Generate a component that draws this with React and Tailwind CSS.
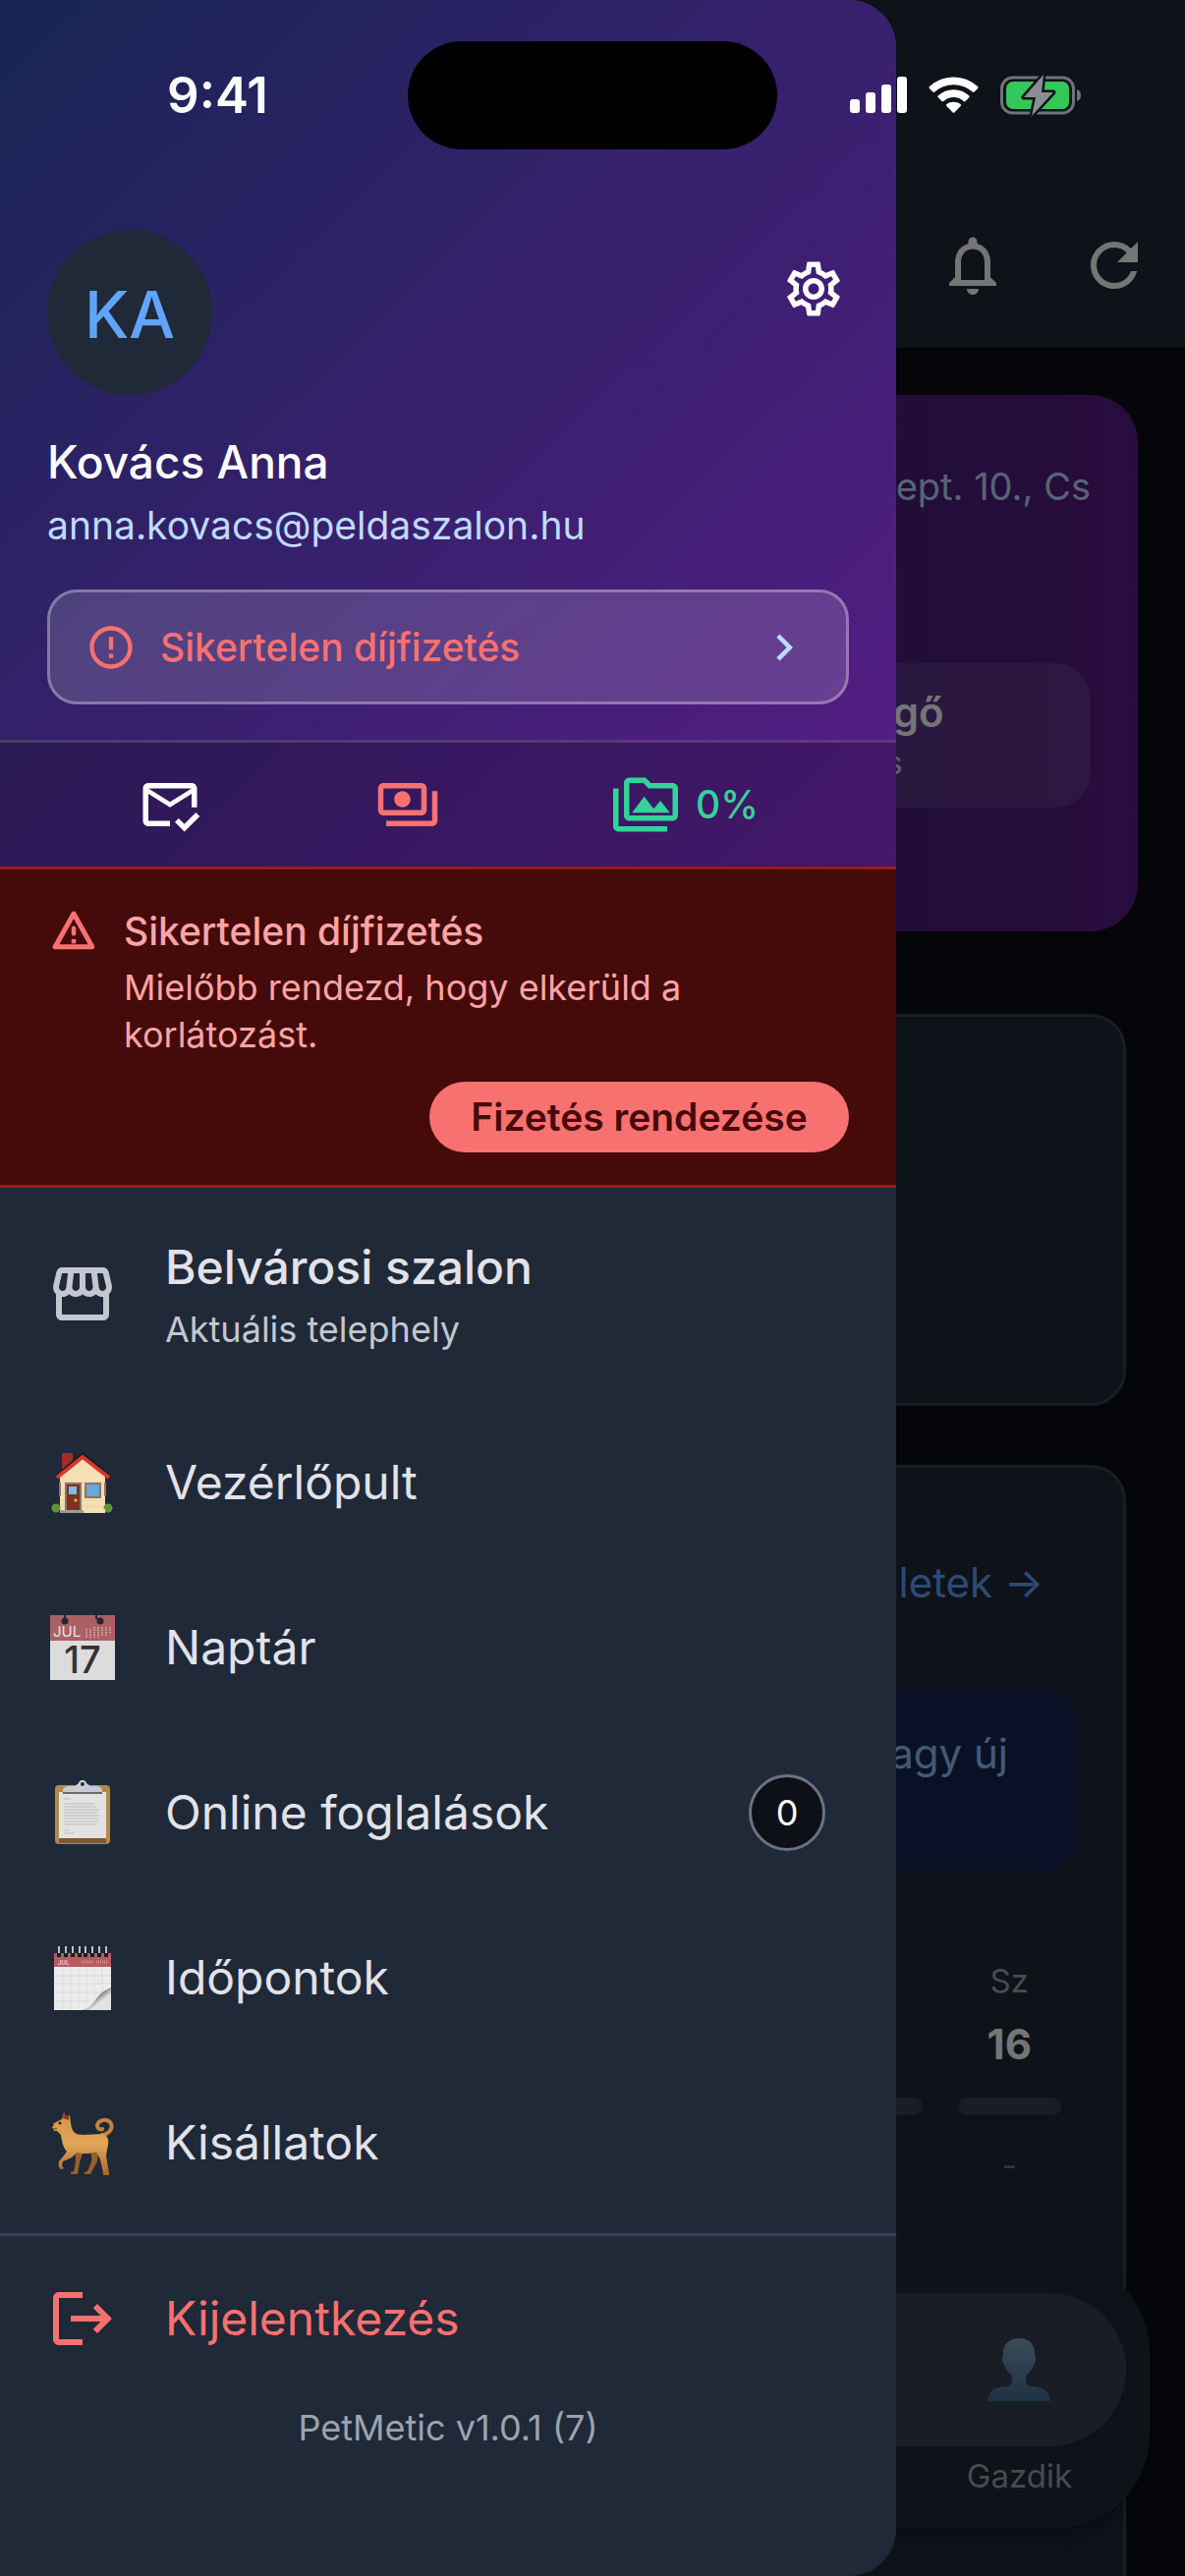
import {
    MdChevronRight,
    MdErrorOutline,
    MdLogout,
    MdNotificationsNone,
    MdOutlinePayments,
    MdOutlinePermMedia,
    MdOutlineSettings,
    MdOutlineStorefront,
    MdRefresh,
} from 'react-icons/md';

function HouseIcon() {
    return (
        <svg viewBox="0 0 66 66" className="size-[66px]" aria-hidden="true">
            <path d="M12 3h11v16h-11z" fill="#a32c22" />
            <path d="M10 27L33 7l23 20v37H10z" fill="#f6dfb4" />
            <path d="M10 33h46M10 39h46M10 45h46M10 51h46M10 57h46" stroke="#ecd3a1" strokeWidth="1" />
            <path d="M9 33h2v14H9zM55 33h2v14h-2z" fill="#8f7361" />
            <path d="M7 26L33 4l27 22" fill="none" stroke="#1c1a1e" strokeWidth="3" />
            <path d="M7 28L33 7l27 21" fill="none" stroke="#d8382c" strokeWidth="4" />
            <rect x="15" y="33" width="17" height="28" fill="#8f7361" />
            <rect x="17" y="35" width="13" height="26" fill="#7a3322" />
            <rect x="19" y="37" width="8" height="8" fill="#79bdec" />
            <circle cx="26" cy="51" r="1.500" fill="#f6c945" />
            <rect x="35" y="33" width="17" height="16" fill="#8f7361" />
            <rect x="37" y="35" width="13" height="12" fill="#64a8dc" />
            <circle cx="6" cy="59" r="4.500" fill="#5f9433" />
            <circle cx="59" cy="59" r="4.500" fill="#5f9433" />
            <path d="M10 61h24v3H10z" fill="#a09a98" />
            <path d="M34 60h22v4H34z" fill="#f6dfb4" />
        </svg>
    );
}

function CalendarIcon() {
    return (
        <svg viewBox="0 0 66 66" className="size-[66px] overflow-visible" aria-hidden="true">
            <rect width="66" height="66" fill="#dcdcdc" />
            <rect width="66" height="26" fill="#ab6063" />
            <circle cx="15" cy="6" r="3.500" fill="#1f2937" />
            <circle cx="51" cy="6" r="3.500" fill="#1f2937" />
            <path d="M15 0v4M47 0v3l3 2" fill="none" stroke="#1f2937" strokeWidth="2" />
            <path d="M37 14v9M41 14v9M45 12v11M49 12v11M53 12v10M57 12v9M61 12v7" stroke="#cf9c9e" strokeWidth="2" strokeDasharray="1.5 1" />
            <text x="3" y="22" fontSize="15" fill="#e9e4e6" className="font-['Inter',sans-serif]">JUL</text>
            <text x="33" y="59" fontSize="38" fontWeight="500" textAnchor="middle" fill="#333333" className="font-['Inter',sans-serif]">17</text>
        </svg>
    );
}

function ClipboardIcon() {
    return (
        <svg viewBox="0 0 66 66" className="size-[66px]" aria-hidden="true">
            <rect x="5" y="5" width="56" height="60" rx="4" fill="#b38a4b" />
            <path d="M9 59h48v5H9z" fill="#7f5a2b" />
            <path d="M9 12h48v47H9z" fill="#e2e2e2" />
            <path d="M14 19h7M14 24h31M14 27h33M14 30h36M14 33h34M14 36h36M14 39h35M14 42h35M14 45h32M14 51h6M14 54h10" stroke="#bdbdbd" strokeWidth="1" />
            <path d="M13 13v-3q1-4 7-4h5l4-3h8l4 3h5q6 0 7 4v3z" fill="#c6cdd2" />
            <path d="M13 12h40v2H13z" fill="#6f6a62" />
            <circle cx="33" cy="4" r="3" fill="#1f2937" stroke="#cdd3d8" strokeWidth="2" />
        </svg>
    );
}

function NotepadIcon() {
    return (
        <svg viewBox="0 0 66 66" className="size-[66px]" aria-hidden="true">
            <defs>
                <linearGradient id="curl" x1="0" y1="0" x2="1" y2="1">
                    <stop offset="0.35" stopColor="#4d4d4d" />
                    <stop offset="0.65" stopColor="#e2e2e2" />
                </linearGradient>
            </defs>
            <rect x="4" y="8" width="58" height="58" fill="#ececec" />
            <rect x="4" y="8" width="58" height="14" fill="#b85b60" />
            <path d="M13 22v44M21 22v44M29 22v42M37 22v38M45 22v32M53 22v28M4 31h58M4 39h58M4 48h52M4 57h36" stroke="#dadada" strokeWidth="1" />
            <path d="M32 66C46 64 44 50 62 43v23z" fill="url(#curl)" />
            <path d="M9 4v8M16 4v8M23 4v8M30 4v8M36 4v8M43 4v8M50 4v8M57 4v8" stroke="#1a1d24" strokeWidth="4" />
            <path d="M9 1v7M16 1v7M23 1v7M30 1v7M36 1v7M43 1v7M50 1v7M57 1v7" stroke="#b9c6d2" strokeWidth="2" />
            <text x="8" y="20" fontSize="6" fontWeight="700" fill="#e6c4c6" className="font-['Inter',sans-serif]">JUL</text>
            <path d="M32 17h12M47 17h12" stroke="#cf8f92" strokeWidth="3" strokeDasharray="1 1" />
        </svg>
    );
}

function DogIcon() {
    return (
        <svg viewBox="0 0 66 66" className="size-[66px]" aria-hidden="true">
            <defs>
                <linearGradient id="fur" x1="0" y1="0" x2="0" y2="1">
                    <stop offset="0" stopColor="#d3924a" />
                    <stop offset="0.5" stopColor="#e3a657" />
                    <stop offset="1" stopColor="#a9672f" />
                </linearGradient>
            </defs>
            <path d="M24 40c3 8 2 13 1 18l-1 4-3 1v2h7l2-12 4-12zM40 41c3 6 3 9 1 14l-3 7-3 1v2h6l7-13 1-10z" fill="#98602c" />
            <path d="M53 25c8-1 12-8 8-13-4-4-12-2-13 3 0 4 3 5 5 4" fill="none" stroke="#c4833c" strokeWidth="4" strokeLinecap="round" />
            <path d="M1 15l7-4 4-2 2-7 3 5 3-2 1 8c1 6 2 9 6 11 6 2 18 0 26 0 5 1 7 5 6 11l-2 11 3 18v2h-6v-2l-3-14-4-8c-7 3-15 2-20 1l-5 5-9 4-1 4 2 3-2 1c-3 0-4-4-3-8l5-6 3-4c-3-3-5-9-6-17l-4-4H4z" fill="url(#fur)" />
            <path d="M13 8l1-7 3 6 2-3v6z" fill="#8d3b2c" />
            <circle cx="10" cy="13" r="1.500" fill="#2d1b12" />
            <circle cx="2" cy="15" r="1.500" fill="#2d1b12" />
            <path d="M2 19h5" stroke="#5a3217" strokeWidth="1" />
        </svg>
    );
}

function PersonIcon() {
    return (
        <svg viewBox="0 0 66 66" className="size-[66px]" aria-hidden="true">
            <defs>
                <linearGradient id="bust" x1="0" y1="0" x2="0" y2="1">
                    <stop offset="0" stopColor="#81a5bd" />
                    <stop offset="1" stopColor="#446f98" />
                </linearGradient>
            </defs>
            <path d="M33 1c10 0 17 6 16 18 2 3 1 6-1 9-2 5-4 8-8 11v5c0 3 1 5 5 6 9 1 18 1 20 15H1c2-14 11-14 20-15 4-1 5-3 5-6v-5c-4-3-6-6-8-11-2-3-3-6-1-9C16 7 23 1 33 1z" fill="url(#bust)" />
        </svg>
    );
}

function MailCheckIcon() {
    return (
        <svg viewBox="0 0 24 24" className="size-[66px]" fill="currentColor" aria-hidden="true">
            <path d="M12 18H4V8l8 5 8-5v5h2V6c0-1.1-.9-2-2-2H4c-1.1 0-2 .9-2 2v12c0 1.1.9 2 2 2h8v-2zm8-12l-8 5-8-5h16zm-2.66 16l-3.54-3.54 1.41-1.41 2.12 2.12 4.24-4.24L23 16.34 17.34 22z" />
        </svg>
    );
}

function WarningIcon() {
    return (
        <svg viewBox="0 0 24 24" className="size-[54px]" aria-hidden="true">
            <path d="M12 4L3.600 19h16.800z" fill="none" stroke="currentColor" strokeWidth="2.200" strokeLinejoin="round" />
            <path d="M12 10.500v2.500" stroke="currentColor" strokeWidth="2" strokeLinecap="round" />
            <path d="M11 15.500h2v2h-2z" fill="currentColor" />
        </svg>
    );
}

function StatusBar() {
    return (
        <div className="absolute inset-x-0 top-0 grid grid-cols-[1fr_auto_1fr] items-center pt-[42px] text-white">
            <span className="pl-7 text-center text-[51px] leading-[60px] font-semibold">9:41</span>
            <span className="h-[110px] w-[376px] rounded-full bg-black" />
            <div className="flex items-center justify-center gap-[22px] pr-8">
                <svg viewBox="0 0 58 38" className="h-[38px] w-[58px]" fill="currentColor" aria-hidden="true">
                    <rect x="0" y="23" width="10" height="14" rx="3" />
                    <rect x="16" y="16" width="10" height="21" rx="3" />
                    <rect x="32" y="8" width="10" height="29" rx="3" />
                    <rect x="48" y="0" width="10" height="37" rx="3" />
                </svg>
                <svg viewBox="0 0 51 38" className="h-[38px] w-[51px]" fill="currentColor" aria-hidden="true">
                    <path d="M25.500 0.500C35 .500 43.500 4.200 50 10c.7.700.7 1.400.1 2l-3.500 3.600c-.6.600-1.300.6-1.900 0C39.500 11 33 8.200 25.500 8.200S11.500 11 6.300 15.600c-.6.600-1.300.6-1.900 0L.9 12c-.6-.6-.6-1.300.1-2C7.500 4.200 16 .5 25.500.5z" />
                    <path d="M25.500 13.200c6 0 11.300 2.200 15.600 6 .7.700.7 1.300.1 2l-3.700 3.700c-.6.600-1.200.6-1.900 0-2.800-2.400-6.200-3.800-10.100-3.800s-7.300 1.400-10.100 3.800c-.7.600-1.300.6-1.900 0l-3.700-3.700c-.6-.7-.6-1.300.1-2 4.300-3.800 9.600-6 15.600-6z" />
                    <path d="M25.500 25.800c2.700 0 5 .8 7 2.200.7.500.7 1.300.1 1.900l-6 6.300c-.7.700-1.500.7-2.200 0l-6-6.300c-.6-.6-.6-1.400.1-1.900 2-1.400 4.300-2.200 7-2.200z" />
                </svg>
                <svg viewBox="0 0 83 42" className="h-[42px] w-[83px]" aria-hidden="true">
                    <rect x="1.500" y="3" width="73" height="36" rx="11" fill="none" stroke="#707479" strokeWidth="3" />
                    <path d="M78 15c3 1 4 3 4 6s-1 5-4 6z" fill="#707479" />
                    <rect x="6" y="7" width="64" height="28" rx="7" fill="#34c759" />
                    <path d="M44 0L24 23h12l-4 19 22-24H42z" fill="#8a8d91" stroke="#0e1319" strokeWidth="5" strokeLinejoin="round" paintOrder="stroke" />
                </svg>
            </div>
        </div>
    );
}

const days = [
    { name: 'P', number: 15, column: 'col-start-6' },
    { name: 'Sz', number: 16, column: 'col-start-7' },
];

function Dashboard() {
    return (
        <div className="flex h-screen flex-col overflow-hidden">
            <header className="flex shrink-0 justify-end bg-[#1f2937] pt-[186px] text-white">
                <button type="button" aria-label="Értesítések" className="flex h-[168px] w-36 items-center justify-center">
                    <MdNotificationsNone className="size-[72px]" />
                </button>
                <button type="button" aria-label="Frissítés" className="flex h-[168px] w-36 items-center justify-center">
                    <MdRefresh className="size-[72px]" />
                </button>
            </header>

            <main className="flex min-h-0 grow flex-col pt-12">
                <section className="mx-12 h-[546px] shrink-0 rounded-[48px] bg-linear-to-r/srgb from-[#172554] to-[#581c87] p-12 pt-[66px]">
                    <p className="text-right text-[38px] leading-[54px] text-[#bfdbfe]">szept. 10., Cs</p>
                    <div className="mt-[153px] ml-auto flex h-[147px] w-[426px] flex-col items-center justify-center rounded-[36px] bg-white/10">
                        <div>
                            <p className="text-[42px] leading-[54px] font-semibold text-white">Függő</p>
                            <p className="text-[33px] leading-[48px] text-[#bfdbfe]">kérés</p>
                        </div>
                    </div>
                </section>

                <section className="mx-[60px] mt-[84px] h-[399px] shrink-0 rounded-[36px] border-[3px] border-[#374151] bg-[#1f2937]" />

                <section className="mx-[60px] mt-[60px] shrink-0 grow rounded-t-[36px] border-[3px] border-b-0 border-[#374151] bg-[#1f2937] px-[45px] pt-[87px]">
                    <div className="flex justify-end pr-9">
                        <a href="#reszletek" className="text-[42px] leading-[60px] text-[#60a5fa]">Részletek →</a>
                    </div>
                    <div className="mt-[78px] h-[186px] rounded-[36px] bg-[#172554] pt-9 pr-[72px]">
                        <p className="text-right text-[42px] leading-[60px] text-[#93c5fd]">vagy új</p>
                    </div>
                    <ul className="mt-[84px] grid grid-cols-7 text-center">
                        {days.map((day) => (
                            <li key={day.number} className={`px-[18px] ${day.column}`}>
                                <p className="text-[33px] leading-[54px] text-[#9ca3af]">{day.name}</p>
                                <p className="mt-2 text-[42px] leading-[60px] font-bold text-white">{day.number}</p>
                                <div className="mt-6 h-[18px] rounded-full bg-[#374151]" />
                                <p className="mt-6 text-[33px] leading-[54px] text-[#6b7280]">-</p>
                            </li>
                        ))}
                    </ul>
                </section>
            </main>

            <nav className="absolute inset-x-9 bottom-12 h-[276px] rounded-[96px] bg-[#1f2937] px-6 pt-9 shadow-lg shadow-black/30">
                <div className="flex h-[156px] justify-end rounded-full bg-[#374151]">
                    <span className="flex w-1/5 items-center justify-center">
                        <PersonIcon />
                    </span>
                </div>
                <div className="flex justify-end">
                    <a href="#gazdik" className="w-1/5 text-center text-[33px] leading-[60px] text-[#9ca3af]">Gazdik</a>
                </div>
            </nav>
        </div>
    );
}

const menuItems = [
    { href: '#vezerlopult', icon: HouseIcon, label: 'Vezérlőpult' },
    { href: '#naptar', icon: CalendarIcon, label: 'Naptár' },
    { href: '#foglalasok', icon: ClipboardIcon, label: 'Online foglalások', badge: 0 },
    { href: '#idopontok', icon: NotepadIcon, label: 'Időpontok' },
    { href: '#kisallatok', icon: DogIcon, label: 'Kisállatok' },
];

function Drawer() {
    return (
        <aside className="absolute inset-y-0 left-0 w-[912px] max-w-full overflow-hidden rounded-r-[48px] bg-[#1f2937]">
            <div className="bg-linear-to-br/srgb from-[#172554] to-[#581c87]">
                <div className="px-12 pt-[234px] pb-9">
                    <div className="flex items-start justify-between">
                        <span className="flex size-[168px] items-center justify-center rounded-full bg-[#1f2937] pt-1 text-[66px] font-medium text-[#60a5fa]">
                            KA
                        </span>
                        <button type="button" aria-label="Beállítások" className="flex h-[120px] w-[72px] items-center justify-center text-white">
                            <MdOutlineSettings className="size-[66px]" />
                        </button>
                    </div>
                    <p className="mt-9 text-[46px] leading-[64px] font-medium text-white">Kovács Anna</p>
                    <p className="mt-1 text-[39px] leading-[58px] text-[#bfdbfe]">anna.kovacs@peldaszalon.hu</p>
                    <button type="button" className="mt-9 flex h-[117px] w-full items-center gap-6 rounded-[30px] border-[3px] border-white/30 bg-white/15 px-9 text-[#f87171]">
                        <MdErrorOutline className="size-[52px]" />
                        <span className="text-[39px] leading-[54px] font-medium">Sikertelen díjfizetés</span>
                        <MdChevronRight className="ml-auto size-[54px] text-[#bfdbfe]" />
                    </button>
                </div>
                <div className="flex h-[129px] items-center justify-center gap-44 border-t-[3px] border-white/15 bg-black/20">
                    <button type="button" aria-label="Üzenetek" className="text-white">
                        <MailCheckIcon />
                    </button>
                    <button type="button" aria-label="Fizetések" className="text-[#f87171]">
                        <MdOutlinePayments className="size-[66px]" />
                    </button>
                    <button type="button" className="flex items-center gap-[18px] text-[39px] leading-[54px] font-medium text-[#34d399]">
                        <MdOutlinePermMedia className="size-[66px]" />
                        0%
                    </button>
                </div>
            </div>

            <div className="flex h-[327px] gap-6 border-y-[3px] border-[#991b1b] bg-[#450a0a] px-12 pt-9 text-[#fca5a5]">
                <div className="text-[#f87171]">
                    <WarningIcon />
                </div>
                <div className="flex grow flex-col">
                    <p className="text-[39px] leading-[54px] font-medium">Sikertelen díjfizetés</p>
                    <p className="mt-1.5 text-[36px] leading-[48px]">
                        Mielőbb rendezd, hogy elkerüld a<br />korlátozást.
                    </p>
                    <button type="button" className="mt-6 h-[72px] min-w-[427px] self-end rounded-full bg-[#f87171] px-9 text-[39px] leading-[54px] font-semibold text-[#450a0a]">
                        Fizetés rendezése
                    </button>
                </div>
            </div>

            <nav className="border-b-[3px] border-[#374151] pt-6 pb-2">
                <a href="#telephely" className="mb-6 flex h-[168px] items-center gap-12 px-12">
                    <MdOutlineStorefront className="size-[72px] text-[#c4c6d0]" />
                    <span className="flex flex-col">
                        <span className="text-[48px] leading-[72px] font-medium text-[#e2e2e9]">Belvárosi szalon</span>
                        <span className="text-[36px] leading-[54px] text-[#c4c6d0]">Aktuális telephely</span>
                    </span>
                </a>
                {menuItems.map((item) => (
                    <a key={item.href} href={item.href} className="flex h-[168px] items-center gap-12 pr-[72px] pl-12">
                        <span className="flex w-[72px] justify-center">
                            <item.icon />
                        </span>
                        <span className="text-[48px] leading-[72px] text-[#e2e2e9]">{item.label}</span>
                        {item.badge !== undefined && (
                            <span className="ml-auto flex size-[78px] items-center justify-center rounded-full border-[3px] border-[#6b7280] bg-[#0d1117] text-[36px] leading-[48px] text-white">
                                {item.badge}
                            </span>
                        )}
                    </a>
                ))}
            </nav>

            <button type="button" className="flex h-[168px] w-full items-center gap-12 px-12 text-[#f87171]">
                <MdLogout className="size-[72px]" />
                <span className="text-[48px] leading-[72px]">Kijelentkezés</span>
            </button>
            <p className="text-center text-[36px] leading-[54px] text-[#9ca3af]">PetMetic v1.0.1 (7)</p>
        </aside>
    );
}

export default function App() {
    return (
        <div className="relative min-h-screen overflow-hidden bg-[#0b0f15] font-['Inter',sans-serif]">
            <Dashboard />
            <div className="absolute inset-0 bg-black/54" />
            <Drawer />
            <StatusBar />
        </div>
    );
}
